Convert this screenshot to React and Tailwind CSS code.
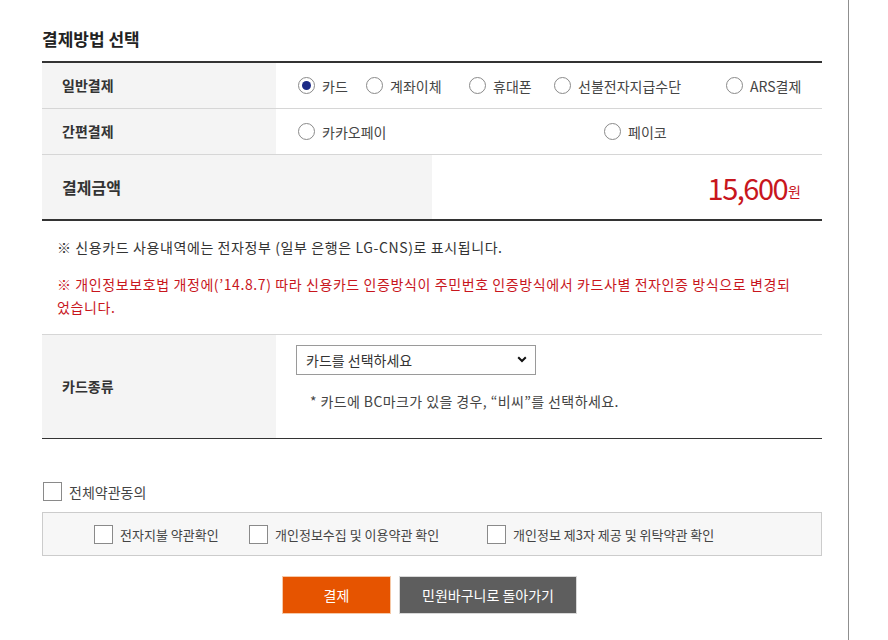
import React from "react";

const FONT = { fontFamily: '"Noto Sans CJK KR", "Noto Sans", sans-serif' };

function Radio({ checked, label, className = "" }) {
  return (
    <div className={`flex items-center ${className}`}>
      <span className="w-[17px] h-[17px] rounded-full border border-[#8a8a8a] bg-white flex items-center justify-center shrink-0">
        {checked && <span className="w-[9px] h-[9px] rounded-full bg-[#1c2a86]" />}
      </span>
      <span className="ml-[7px] text-[14px] text-[#444] leading-none">{label}</span>
    </div>
  );
}

function Check({ label, className = "", size = "text-[13px]" }) {
  return (
    <div className={`flex items-center ${className}`}>
      <span className="w-[19px] h-[19px] border border-[#8a8a8a] bg-white shrink-0" />
      <span className={`ml-[7px] ${size} text-[#444] leading-none`}>{label}</span>
    </div>
  );
}

export default function App() {
  return (
    <div className="w-[888px] h-[640px] bg-white flex overflow-hidden" style={FONT}>
      <div className="w-[849px] h-[640px] border-r border-[#8f8f8f] pl-[42px]">
        <div className="pt-[27px] text-[17px] leading-[24px] font-semibold text-[#222]">결제방법 선택</div>

        <div className="mt-[10px] w-[780px] border-t-2 border-[#333]">
          <div className="flex h-[46px] border-b border-[#d6d6d6]">
            <div className="w-[234px] bg-[#f4f4f4] pl-[20px] flex items-center text-[14px] font-bold text-[#333]">일반결제</div>
            <div className="flex-1 pl-[22px] flex items-center">
              <Radio checked label="카드" className="w-[68px]" />
              <Radio label="계좌이체" className="w-[103px]" />
              <Radio label="휴대폰" className="w-[85px]" />
              <Radio label="선불전자지급수단" className="w-[172px]" />
              <Radio label="ARS결제" />
            </div>
          </div>
          <div className="flex h-[46px] border-b border-[#d6d6d6]">
            <div className="w-[234px] bg-[#f4f4f4] pl-[20px] flex items-center text-[14px] font-bold text-[#333]">간편결제</div>
            <div className="flex-1 pl-[22px] flex items-center">
              <Radio label="카카오페이" className="w-[306px]" />
              <Radio label="페이코" />
            </div>
          </div>
          <div className="flex h-[66px] border-b-[2px] border-[#333]">
            <div className="w-[390px] bg-[#f4f4f4] pl-[20px] flex items-center text-[16px] font-bold text-[#333]">결제금액</div>
            <div className="flex-1 pr-[21px] flex items-center justify-end text-[#c8161d]">
              <span className="text-[29px] leading-none tracking-[-1.5px]">15,600</span>
              <span className="text-[14px] leading-none ml-[1px] mt-[8px]">원</span>
            </div>
          </div>

          <div className="pl-[15px] pt-[15px] pb-[15px] border-b border-[#d6d6d6] text-[14px] leading-[23px] tracking-[0.6px]">
            <p className="text-[#333]">※ 신용카드 사용내역에는 전자정부 (일부 은행은 LG-CNS)로 표시됩니다.</p>
            <p className="mt-[14px] text-[#c8161d] w-[740px]">※ 개인정보보호법 개정에(’14.8.7) 따라 신용카드 인증방식이 주민번호 인증방식에서 카드사별 전자인증 방식으로 변경되었습니다.</p>
          </div>

          <div className="flex h-[104px] border-b border-[#333]">
            <div className="w-[234px] bg-[#f4f4f4] pl-[20px] flex items-center text-[14px] font-bold text-[#333]">카드종류</div>
            <div className="flex-1 pl-[20px] pt-[10px]">
              <div className="relative w-[240px] h-[30px]">
                <select className="appearance-none w-[240px] h-[30px] border border-[#9a9a9a] bg-white pl-[9px] text-[14px] text-[#333] outline-none" style={FONT}>
                  <option>카드를 선택하세요</option>
                </select>
                <svg className="absolute right-[9px] top-[11px] pointer-events-none" width="10" height="7" viewBox="0 0 10 7">
                  <path d="M1.2 1.2 L5 5 L8.8 1.2" fill="none" stroke="#111" strokeWidth="2" />
                </svg>
              </div>
              <p className="mt-[15px] pl-[14px] text-[14px] leading-[23px] tracking-[0.4px] text-[#444]">* 카드에 BC마크가 있을 경우, “비씨”를 선택하세요.</p>
            </div>
          </div>

          <Check label="전체약관동의" size="text-[14px]" className="mt-[43px] ml-[1px]" />

          <div className="mt-[11px] h-[44px] border border-[#cccccc] bg-[#f7f7f7] flex items-center pl-[51px]">
            <Check label="전자지불 약관확인" className="w-[155px]" />
            <Check label="개인정보수집 및 이용약관 확인" className="w-[238px]" />
            <Check label="개인정보 제3자 제공 및 위탁약관 확인" />
          </div>

          <div className="mt-[20px] flex pl-[240px] gap-[8px]">
            <button className="w-[109px] h-[38px] bg-[#e65400] border border-[#f6c9a8] text-white text-[14px]" style={FONT}>결제</button>
            <button className="w-[178px] h-[38px] bg-[#5e5e5e] border border-[#d8d8d8] text-white text-[14px]" style={FONT}>민원바구니로 돌아가기</button>
          </div>
        </div>
      </div>
    </div>
  );
}
